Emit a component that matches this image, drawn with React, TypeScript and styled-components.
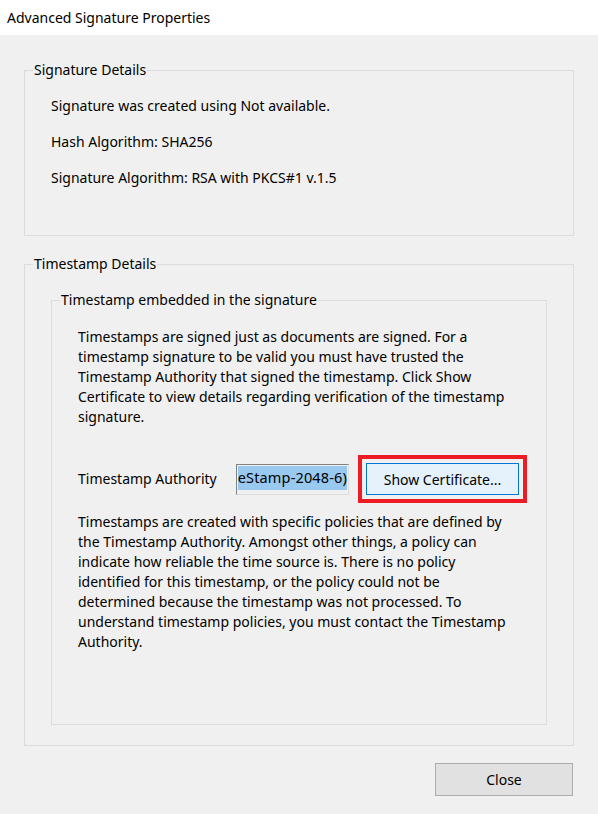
import React from 'react';
import styled, { createGlobalStyle } from 'styled-components';

const GlobalStyle = createGlobalStyle`
	html, body {
		margin: 0;
		padding: 0;
		background: #f0f0f0;
	}
	body {
		font-family: 'Noto Sans', 'Open Sans', sans-serif;
		font-size: 14px;
		color: #000;
	}
`;

const Window = styled.div`
	width: 598px;
	height: 814px;
	display: flex;
	flex-direction: column;
	background: #f0f0f0;
	overflow: hidden;
`;

const TitleBar = styled.div`
	height: 35px;
	flex: 0 0 auto;
	display: flex;
	align-items: center;
	padding-left: 7px;
	background: #fff;
	font-size: 14px;
`;

const Body = styled.div`
	display: flex;
	flex-direction: column;
	padding: 25px 24px 0 24px;
`;

const GroupBox = styled.fieldset<{ $height: number; $inset?: number }>`
	box-sizing: border-box;
	height: ${(p) => p.$height}px;
	margin: 0 ${(p) => p.$inset || 0}px;
	padding: 0;
	border: 1px solid #dcdcdc;
	min-width: 0;
`;

const Legend = styled.legend`
	margin-left: 8px;
	padding: 0 1px;
	line-height: 20px;
	font-size: 14px;
`;

const Spacer = styled.div<{ $h: number }>`
	height: ${(p) => p.$h}px;
	flex: 0 0 auto;
`;

const DetailList = styled.div`
	display: flex;
	flex-direction: column;
	gap: 16px;
	padding: 16px 0 0 26px;
`;

const Line = styled.div`
	line-height: 20px;
	white-space: nowrap;
`;

const Paragraph = styled.p`
	margin: 0;
	line-height: 20px;
	white-space: nowrap;
`;

const InnerContent = styled.div`
	display: flex;
	flex-direction: column;
	padding: 17px 0 0 26px;
`;

const AuthorityRow = styled.div`
	display: flex;
	align-items: center;
	margin: 28px 0 9px;
`;

const FieldLabel = styled.span`
	width: 158px;
	line-height: 20px;
`;

const TextField = styled.div`
	box-sizing: border-box;
	width: 113px;
	height: 31px;
	padding: 1px;
	border: 1px solid;
	border-color: #828282 #dcdcdc #dcdcdc #828282;
	background: #f0f0f0;
	overflow: hidden;
`;

const Selected = styled.div`
	display: flex;
	justify-content: flex-end;
	height: 24px;
	line-height: 23px;
	font-size: 14.5px;
	letter-spacing: 0.15px;
	background: #99c9ef;
	white-space: nowrap;
	overflow: hidden;
`;

const Highlight = styled.div`
	margin-left: 9px;
	padding: 4px;
	border: 4px solid #ed1c24;
`;

const Button = styled.button<{ $focused?: boolean }>`
	box-sizing: border-box;
	font-family: inherit;
	font-size: 14px;
	color: #000;
	border: 1px solid ${(p) => (p.$focused ? '#0078d7' : '#adadad')};
	background: ${(p) => (p.$focused ? '#e5f1fb' : '#e1e1e1')};
	padding: 0;
	cursor: default;
`;

const CertButton = styled(Button)`
	width: 153px;
	height: 32px;
`;

const Footer = styled.div`
	display: flex;
	justify-content: flex-end;
	padding: 17px 1px 0 0;
`;

const CloseButton = styled(Button)`
	width: 138px;
	height: 33px;
`;

export default function App() {
	return (
		<Window>
			<GlobalStyle />
			<TitleBar>Advanced Signature Properties</TitleBar>
			<Body>
				<GroupBox $height={176}>
					<Legend>Signature Details</Legend>
					<DetailList>
						<Line>Signature was created using Not available.</Line>
						<Line>Hash Algorithm: SHA256</Line>
						<Line>Signature Algorithm: RSA with PKCS#1 v.1.5</Line>
					</DetailList>
				</GroupBox>
				<Spacer $h={18} />
				<GroupBox $height={492}>
					<Legend>Timestamp Details</Legend>
					<Spacer $h={16} />
					<GroupBox $height={435} $inset={26}>
						<Legend>Timestamp embedded in the signature</Legend>
						<InnerContent>
							<Paragraph>
								Timestamps are signed just as documents are signed. For a<br />
								timestamp signature to be valid you must have trusted the<br />
								Timestamp Authority that signed the timestamp. Click Show<br />
								Certificate to view details regarding verification of the timestamp<br />
								signature.
							</Paragraph>
							<AuthorityRow>
								<FieldLabel>Timestamp Authority</FieldLabel>
								<TextField>
									<Selected>
										<span>eStamp-2048-6)</span>
									</Selected>
								</TextField>
								<Highlight>
									<CertButton $focused>Show Certificate...</CertButton>
								</Highlight>
							</AuthorityRow>
							<Paragraph>
								Timestamps are created with specific policies that are defined by<br />
								the Timestamp Authority. Amongst other things, a policy can<br />
								indicate how reliable the time source is. There is no policy<br />
								identified for this timestamp, or the policy could not be<br />
								determined because the timestamp was not processed. To<br />
								understand timestamp policies, you must contact the Timestamp<br />
								Authority.
							</Paragraph>
						</InnerContent>
					</GroupBox>
				</GroupBox>
				<Footer>
					<CloseButton>Close</CloseButton>
				</Footer>
			</Body>
		</Window>
	);
}
